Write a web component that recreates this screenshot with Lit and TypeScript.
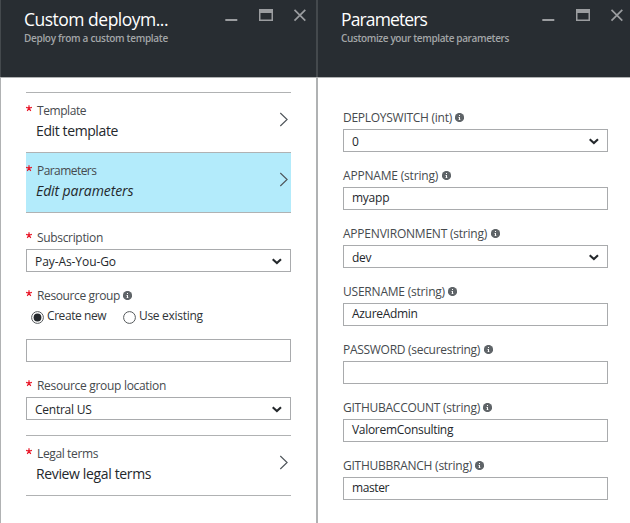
import { LitElement, html, svg, css, nothing } from "lit";
import { customElement, property } from "lit/decorators.js";

const text = (value: string, spacing: number) =>
  html`<span style="letter-spacing:${spacing}px">${value}</span>`;

const infoIcon = html`<svg width="9" height="9" viewBox="0 0 9 9">
  <circle cx="4.5" cy="4.5" r="4.6" fill="#5f6468" />
  <path d="M4 2h1v1H4zM4 4h1v3H4z" fill="#fff" />
  <path d="M3 4h1v.8H3zM3 6.4h3V7H3z" fill="#fff" opacity=".55" />
</svg>`;

const star = html`<svg class="star" width="6" height="7" viewBox="0 0 6 7">
  <path d="M3 3.3V.2M3 3.3L.1 2.4M3 3.3L5.9 2.4M3 3.3L1.2 5.9M3 3.3L4.8 5.9" stroke="#e81123" stroke-width="1.2" />
</svg>`;

@customElement("blade-header")
class BladeHeader extends LitElement {
  @property() heading = "";
  @property() subtitle = "";
  @property({ type: Number }) headingSpacing = 0;
  @property({ type: Number }) subtitleSpacing = 0;
  static styles = css`
    :host { display: flex; justify-content: space-between; height: 77px; background: #282d32; border-bottom: 1px solid #b0b2b3; }
    .titles { padding-left: 23px; white-space: nowrap; }
    .heading { margin-top: 7px; font-size: 17.5px; line-height: 24px; color: #fff; }
    .subtitle { font-size: 10px; font-weight: 600; line-height: 14px; color: #a3a6a8; }
    .controls { display: block; margin: 9px var(--controls-inset, 10px) 0 0; flex: none; }
  `;
  render() {
    return html`<div class="titles">
        <div class="heading">${text(this.heading, this.headingSpacing)}</div>
        <div class="subtitle">${text(this.subtitle, this.subtitleSpacing)}</div>
      </div>
      <svg class="controls" width="81" height="13" viewBox="0 0 81 13">
        <path d="M.3 10h12v2H.3z" fill="#9b9da0" />
        <path fill-rule="evenodd" d="M34 0h14v12H34zM35.5 4v6.5h11V4z" fill="#9b9da0" />
        <path d="M69.5 .8L80.3 11.6M80.3 .8L69.5 11.6" stroke="#9b9da0" stroke-width="1.7" />
      </svg>`;
  }
}

@customElement("nav-row")
class NavRow extends LitElement {
  @property() label = "";
  @property() value = "";
  @property({ type: Number }) labelSpacing = 0;
  @property({ type: Number }) valueSpacing = 0;
  static styles = css`
    :host { display: flex; justify-content: space-between; height: 59px; border-bottom: 1px solid #b0b2b3; }
    :host([ruled]) { border-top: 1px solid #b0b2b3; }
    :host([active]) { background: #b3ebfb; }
    :host([active]) .value { font-style: italic; }
    .label { display: flex; height: 16px; margin-top: 9px; font-size: 12px; line-height: 18px; color: #464a4e; }
    .star { margin: 3px 5px 0 0; }
    .value { margin: 3px 0 0 10px; font-size: 14px; line-height: 20px; color: #24282c; }
    .chevron { margin: 19px 3px 0 0; }
  `;
  render() {
    return html`<div>
        <div class="label">${star}${text(this.label, this.labelSpacing)}</div>
        <div class="value">${text(this.value, this.valueSpacing)}</div>
      </div>
      <svg class="chevron" width="9" height="15" viewBox="0 0 9 15">
        <path d="M1.3 1l6.8 6.5L1.3 14" fill="none" stroke="#50565b" stroke-width="1.15" />
      </svg>`;
  }
}

@customElement("form-field")
class FormField extends LitElement {
  @property() label = "";
  @property() value = "";
  @property({ type: Number }) labelSpacing = 0;
  @property({ type: Number }) valueSpacing = 0;
  @property({ type: Boolean }) required = false;
  @property({ type: Boolean }) info = false;
  @property({ type: Boolean }) dropdown = false;
  static styles = css`
    :host { display: block; }
    .label { display: flex; height: 16px; font-size: 12px; line-height: 18px; color: #464a4e; white-space: nowrap; }
    .star { margin: 3px 5px 0 0; }
    .label svg:not(.star) { margin: 4px 0 0 3.5px; }
    .box { display: flex; box-sizing: border-box; justify-content: space-between; height: 23px; margin-top: 4px; padding: 1px 8px 0 8px; border: 1px solid #a9abad; font-size: 12px; line-height: 18px; color: #24282c; }
    .box.dropdown { padding-top: 3px; }
    .arrow { margin-top: 5px; }
  `;
  render() {
    return html`<div class="label">
        ${this.required ? star : nothing}${text(this.label, this.labelSpacing)}${this.info ? infoIcon : nothing}
      </div>
      <slot><div class="box ${this.dropdown ? "dropdown" : ""}">
        ${text(this.value, this.valueSpacing)}
        ${this.dropdown
          ? html`<svg class="arrow" width="10" height="7" viewBox="0 0 10 7">
              <path d="M.7 1.3L4.9 5.1l4.1-3.8" fill="none" stroke="#24282c" stroke-width="2.1" />
            </svg>`
          : nothing}
      </div></slot>`;
  }
}

const radio = (checked: boolean) => html`<svg width="13" height="13" viewBox="0 0 13 13">
  <circle cx="6.5" cy="6.5" r="5.9" fill="#fff" stroke="#55595c" stroke-width="1" />
  ${checked ? svg`<circle cx="6.5" cy="6.5" r="3.9" fill="#24282c" />` : nothing}
</svg>`;

const PARAMETERS = [
  { label: "DEPLOYSWITCH (int)", ls: -0.27, value: "0", vs: 0, dropdown: true },
  { label: "APPNAME (string)", ls: -0.19, value: "myapp", vs: -0.25, dropdown: false },
  { label: "APPENVIRONMENT (string)", ls: -0.22, value: "dev", vs: -0.3, dropdown: true },
  { label: "USERNAME (string)", ls: -0.21, value: "AzureAdmin", vs: -0.3, dropdown: false },
  { label: "PASSWORD (securestring)", ls: -0.29, value: "", vs: 0, dropdown: false },
  { label: "GITHUBACCOUNT (string)", ls: -0.25, value: "ValoremConsulting", vs: -0.3, dropdown: false },
  { label: "GITHUBBRANCH (string)", ls: -0.25, value: "master", vs: -0.4, dropdown: false },
];

@customElement("app-root")
class AppRoot extends LitElement {
  static styles = css`
    :host { display: grid; grid-template-columns: 318px 312px; height: 523px; overflow: hidden; background: #fff; font-family: "Open Sans", "Noto Sans", sans-serif; }
    .blade { display: flex; flex-direction: column; }
    .last { --controls-inset: 7px; }
    .edges { display: grid; grid-template-columns: 1px 1fr 2px; }
    .edge { background: linear-gradient(#44494d 77px, #b0b2b3 77px); }
    .deploy { padding: 14px 25px 0 25px; }
    .fields { display: flex; flex-direction: column; gap: 15px; margin: 16px 0 15px; }
    .radios { display: flex; height: 16px; margin: 4px 0 0 5px; font-size: 12px; line-height: 18px; color: #303438; white-space: nowrap; }
    .option { display: flex; gap: 3px; width: 92px; }
    .option svg { margin-top: 3.5px; }
    .parameters { display: flex; flex-direction: column; gap: 15px; padding: 31px 22px 0 25px; }
    .name { box-sizing: border-box; height: 23px; margin-top: 16px; border: 1px solid #a9abad; }
  `;
  render() {
    return html`<section class="edges">
        <div class="edge"></div>
        <div class="blade">
          <blade-header heading="Custom deploym..." .headingSpacing=${-0.5} subtitle="Deploy from a custom template" .subtitleSpacing=${-0.31}></blade-header>
          <div class="deploy">
            <nav-row ruled label="Template" .labelSpacing=${-0.42} value="Edit template" .valueSpacing=${-0.39}></nav-row>
            <nav-row active label="Parameters" .labelSpacing=${-0.56} value="Edit parameters" .valueSpacing=${-0.1}></nav-row>
            <div class="fields">
              <form-field required dropdown label="Subscription" .labelSpacing=${-0.33} value="Pay-As-You-Go" .valueSpacing=${-0.08}></form-field>
              <form-field required info label="Resource group" .labelSpacing=${-0.38}>
                <div class="radios">
                  <div class="option">${radio(true)}${text("Create new", -0.42)}</div>
                  <div class="option">${radio(false)}${text("Use existing", -0.3)}</div>
                </div>
                <div class="name"></div>
              </form-field>
              <form-field required dropdown label="Resource group location" .labelSpacing=${-0.3} value="Central US" .valueSpacing=${-0.25}></form-field>
            </div>
            <nav-row ruled label="Legal terms" .labelSpacing=${-0.37} value="Review legal terms" .valueSpacing=${-0.36}></nav-row>
          </div>
        </div>
        <div class="edge"></div>
      </section>
      <section class="blade last">
        <blade-header heading="Parameters" .headingSpacing=${-0.87} subtitle="Customize your template parameters" .subtitleSpacing=${-0.37}></blade-header>
        <div class="parameters">
          ${PARAMETERS.map((p) => html`<form-field info label=${p.label} .labelSpacing=${p.ls} value=${p.value} .valueSpacing=${p.vs} ?dropdown=${p.dropdown}></form-field>`)}
        </div>
      </section>`;
  }
}
